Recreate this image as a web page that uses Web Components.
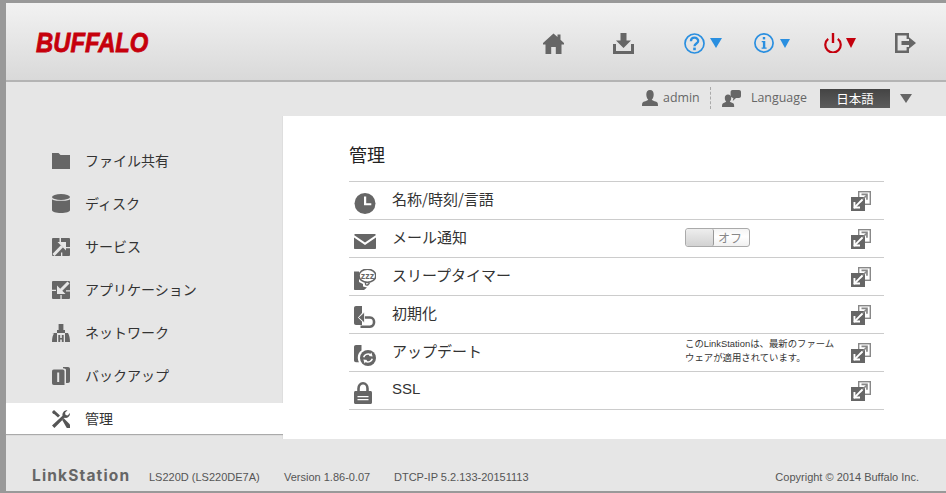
<!DOCTYPE html>
<html lang="ja"><head><meta charset="utf-8"><title>LinkStation</title>
<style>
html,body{margin:0;padding:0;height:100%;background:#999}
body{width:946px;height:493px;overflow:hidden;font-family:"Liberation Sans","Noto Sans CJK JP",sans-serif}
</style></head><body>
<ls-app>
  <ls-header slot="header"></ls-header>
  <ls-subbar slot="subbar"></ls-subbar>
  <ls-nav slot="nav">
    <ls-nav-item icon="folder">ファイル共有</ls-nav-item>
    <ls-nav-item icon="disk">ディスク</ls-nav-item>
    <ls-nav-item icon="service">サービス</ls-nav-item>
    <ls-nav-item icon="app">アプリケーション</ls-nav-item>
    <ls-nav-item icon="network">ネットワーク</ls-nav-item>
    <ls-nav-item icon="backup">バックアップ</ls-nav-item>
    <ls-nav-item icon="tools" active>管理</ls-nav-item>
  </ls-nav>
  <ls-panel slot="panel" heading="管理">
    <ls-row icon="clock" label="名称/時刻/言語"></ls-row>
    <ls-row icon="mail" label="メール通知"><ls-toggle>オフ</ls-toggle></ls-row>
    <ls-row icon="sleep" label="スリープタイマー"></ls-row>
    <ls-row icon="reset" label="初期化"></ls-row>
    <ls-row icon="update" label="アップデート"><ls-note>このLinkStationは、最新のファーム<br>ウェアが適用されています。</ls-note></ls-row>
    <ls-row icon="lock" label="SSL" latin></ls-row>
  </ls-panel>
  <ls-footer slot="footer"></ls-footer>
</ls-app>
<script>
const ICONS={
 home:[21,21,`<path fill="#666" d="M10.5 0.5 14.5 4V1.5H17.5V6.7L21 10V11.5H18.5V21H12.8V14H8.2V21H2.5V11.5H0V10Z"/>`],
 download:[21,21,`<path fill="#666" d="M7.5 0H13.5V7.5H18L10.5 15 3 7.5H7.5Z"/><path fill="#666" d="M0 11H3V18H18V11H21V21H0Z"/>`],
 help:[21,21,`<circle cx="10.5" cy="10.5" r="9.5" fill="none" stroke="#2a8fe0" stroke-width="1.7"/><path fill="none" stroke="#2a8fe0" stroke-width="2.3" d="M6.9 8.2C6.9 3.6 14.2 3.6 14.2 8C14.2 10.6 10.5 10.4 10.5 13.2"/><rect x="9.2" y="14.6" width="2.6" height="2.6" fill="#2a8fe0"/>`],
 info:[20,20,`<circle cx="10" cy="10" r="9.1" fill="none" stroke="#2a8fe0" stroke-width="1.7"/><rect x="8.8" y="4" width="2.4" height="2.4" fill="#2a8fe0"/><path fill="#2a8fe0" d="M7.7 7.9H11.3V14.4H12.6V15.8H7.6V14.4H8.9V9.3H7.7Z"/>`],
 power:[18,20,`<path fill="none" stroke="#c4000d" stroke-width="2.2" d="M4.2 5.8A7.7 7.7 0 1 0 13.8 5.8"/><path fill="none" stroke="#c4000d" stroke-width="2.4" d="M9 0V10"/>`],
 logout:[21,20,`<path fill="#666" d="M0 0H14V6H11.6V2.4H2.6V17.6H11.6V14H14V20H0Z"/><path fill="#666" d="M6.5 8H14V4.3L21 10 14 15.7V12H6.5Z"/>`],
 person:[16,16,`<path fill="#666" d="M8 0C10.6 0 11.7 2 11.7 4.4C11.7 7 10.6 8.8 9.8 9.6C10 10.8 13.4 11.2 15 12.2C15.8 12.8 16 14 16 16H0C0 14 .2 12.8 1 12.2C2.6 11.2 6 10.8 6.2 9.6C5.4 8.8 4.3 7 4.3 4.4C4.3 2 5.4 0 8 0Z"/>`],
 lang:[19,17,`<path fill="#666" d="M6 4.5C8 4.5 9.2 6 9.2 8C9.2 9.7 8.5 11 7.8 11.6C8 12.4 10.6 12.7 11.5 13.5C12 14 12.2 15.4 12.2 17H0C0 15.4.2 14 .8 13.5C1.7 12.7 4 12.4 4.2 11.6C3.5 11 2.8 9.7 2.8 8C2.8 6 4 4.5 6 4.5Z"/><path fill="#666" d="M10.5 0H17C18.2 0 19 .8 19 2V6C19 7.2 18.2 8 17 8H14L10.8 11 11.4 8C10 7.8 8.6 7 8.6 6V2C8.6 .8 9.4 0 10.5 0Z"/>`],
 folder:[18,16,`<path fill="#666" d="M0 0H6.5L8.5 2H18V16H0Z"/>`],
 disk:[18,19,`<ellipse cx="9" cy="3" rx="9" ry="3" fill="#666"/><path fill="#666" d="M0 5.2C2 7.4 16 7.4 18 5.2V16C18 18 14 19 9 19S0 18 0 16Z"/>`],
 service:[18,18,`<rect width="18" height="18" rx="1" fill="#666"/><path fill="#e6e6e6" d="M7.5 0H9V4H7.5ZM14 9H18V10.3H14ZM9 14.5H10.3V18H9Z"/><path fill="none" stroke="#e6e6e6" stroke-width="3" d="M1.5 17 10 8.2"/><path fill="#e6e6e6" d="M14 4V12.5L5.5 4Z"/>`],
 app:[18,18,`<rect width="18" height="18" rx="1" fill="#666"/><path fill="#e6e6e6" d="M0 8.8H4V10.1H0ZM14 9.2H18V10.5H14ZM8.4 14H9.7V18H8.4Z"/><path fill="none" stroke="#e6e6e6" stroke-width="3" d="M8.5 9.5 16.5 1.5"/><path fill="#e6e6e6" d="M5 13V4.5L13.5 13Z"/>`],
 network:[18,18,`<path fill="#666" d="M6.6 0H11.4V6H13V9H5V6H6.6Z"/><path fill="#666" d="M0 9H5V18H0C0 14 .8 11 2 9.5Z"/><path fill="#666" d="M13 9H16C17.2 11 18 14 18 18H13Z"/><path fill="#666" d="M6.3 11H8.2V14H9.8V11H11.7V18H9.8V15.5H8.2V18H6.3Z"/>`],
 backup:[18,18,`<path fill="#666" d="M11 0H16C17.2 0 18 .8 18 2V14C18 15.2 17.2 16 16 16H14V3C14 2 12.8 1.2 11 1.2Z"/><path fill="#666" d="M1.8 2.5H10.5C11.8 2.5 12.5 3.3 12.5 4.5V18H1.8C.6 18 0 17.2 0 16V4.5C0 3.3 .6 2.5 1.8 2.5Z"/><rect x="5.2" y="5.5" width="2" height="9.5" fill="#e6e6e6"/>`],
 tools:[18,18,`<path fill="#555" d="M0 15.6 10.5 5.8C10 3 12 0 15.5 .3L13 2.8 13.6 4.9 15.6 5.4 18 3C18.2 6.4 15.4 8.4 12.6 7.8L2.4 18Z"/><path fill="#555" d="M0 2 2 0 8 5.6 6 7.6 2.4 4.2 1 3.8Z"/><path fill="#555" d="M10.2 10 12 8.4 18 14.4V18H14.8Z"/>`],
 clock:[22,21,`<circle cx="11" cy="10.5" r="10.5" fill="#666"/><path fill="#fff" d="M10 3.5H12.2V10.2H17.3V12.2H10Z"/>`],
 mail:[22,15,`<path fill="#666" d="M0 1 1 0H21L22 1 11 8.5Z"/><path fill="#666" d="M0 3.4 11 11 22 3.4V14C22 14.6 21.6 15 21 15H1C.4 15 0 14.6 0 14Z"/>`],
 sleep:[22,21,`<path fill="#666" d="M0 2.5H5V13L9 15V17.5L13 18.5 10 21H1C.4 21 0 20.6 0 20Z"/><ellipse cx="13.4" cy="6.8" rx="8.4" ry="6.6" fill="#fff" stroke="#666" stroke-width="1.6"/><text x="13.4" y="10" text-anchor="middle" font-family="Liberation Sans" font-weight="700" font-size="9" fill="#666">zzz</text><path fill="none" stroke="#666" stroke-width="1.4" d="M11.5 13V15C11.5 16.4 13.5 16.4 14.2 15.5L15.5 14"/>`],
 reset:[22,22,`<path fill="#666" d="M2 0H8V7L4 11.5 8 15.5V19H2C.8 19 0 18.2 0 17V2C0 .8.8 0 2 0Z"/><path fill="none" stroke="#666" stroke-width="2.6" d="M9 11.5H16C21.4 11.5 21.4 20.7 16 20.7H6.5"/><path fill="#666" stroke="#fff" stroke-width=".8" d="M4.5 11.5 10.5 6V17Z"/>`],
 update:[22,21,`<path fill="#666" d="M2 0H7.5V5.5C5 7 3.8 9.6 3.8 12.4 3.8 14 4.2 15.8 5 17.2H2C.8 17.2 0 16.4 0 15.2V2C0 .8.8 0 2 0Z"/><circle cx="14" cy="13" r="8" fill="#666"/><path fill="none" stroke="#fff" stroke-width="1.5" d="M9.7 12.2C10.3 9.8 13.6 8 16.6 9.8M18.3 13.8C17.7 16.2 14.4 18 11.4 16.2"/><path fill="#fff" d="M17.4 7.6 18.6 11.4 14.8 11ZM10.6 18.4 9.4 14.6 13.2 15Z"/>`],
 lock:[18,22,`<path fill="none" stroke="#666" stroke-width="2.6" d="M4.5 10V6.5C4.5 3.4 6.4 1.3 9 1.3S13.5 3.4 13.5 6.5V10"/><path fill="#666" d="M1.5 9H16.5C17.4 9 18 9.6 18 10.5V20.5C18 21.4 17.4 22 16.5 22H1.5C.6 22 0 21.4 0 20.5V10.5C0 9.6 .6 9 1.5 9Z"/><path fill="#fff" d="M3.5 14H14.5V15.3H3.5ZM3.5 17H14.5V18.3H3.5Z"/>`],
 popup:[20,20,`<rect x="7.7" y=".7" width="11.6" height="12.6" fill="#fff" stroke="#888" stroke-width="1.4"/><rect y="6" width="14" height="14" fill="#666"/><path fill="none" stroke="#fff" stroke-width="1.8" d="M3 17 9.8 10.2"/><path fill="#fff" d="M2.5 11H4.4V15.6H9V17.5H2.5Z"/><path fill="none" stroke="#888" stroke-width="1.6" d="M9.5 10.5 16 4"/><path fill="#888" d="M10.5 2.5H16.8V8.8H15.1V4.2H10.5Z"/><path fill="none" stroke="#fff" stroke-width="1.8" d="M9 11 11.5 8.5"/>`]
};
function svg(n){const [w,h,b]=ICONS[n];return `<svg xmlns="http://www.w3.org/2000/svg" width="${w}" height="${h}" viewBox="0 0 ${w} ${h}" style="display:block">${b}</svg>`}
function def(tag,html){customElements.define(tag,class extends HTMLElement{
  constructor(){super();this.attachShadow({mode:'open'});}
  connectedCallback(){this.shadowRoot.innerHTML=typeof html==='function'?html(this):html;}
});}
const tri=(c,w,h)=>`<span style="display:block;width:0;height:0;border-left:${w/2}px solid transparent;border-right:${w/2}px solid transparent;border-top:${h}px solid ${c}"></span>`;

def('ls-app',`<style>
:host{display:flex;flex-direction:column;box-sizing:border-box;width:946px;height:493px;padding:3px 0 2px 6px;background:#999}
.mid{display:flex;height:323px;flex:none}
.foot{flex:1;display:flex;min-height:0}
::slotted(ls-footer){flex:1}
</style>
<slot name="header"></slot><slot name="subbar"></slot>
<div class="mid"><slot name="nav"></slot><slot name="panel"></slot></div>
<div class="foot"><slot name="footer"></slot></div>`);

def('ls-header',`<style>
:host{display:flex;align-items:center;box-sizing:border-box;height:79px;flex:none;background:linear-gradient(#f2f2f2,#d9d9d9);border-bottom:2px solid #b4b4b4}
.logo{margin-left:30px;margin-top:2px;width:113px;flex:none;font:italic 700 28px/28px "Liberation Sans",sans-serif;color:#c6000c;-webkit-text-stroke:.8px #c6000c;transform:scaleX(.85);transform-origin:left center;white-space:nowrap}
.i{display:flex;align-items:center;margin-top:3px}
.home{margin-left:394px}.dl{margin-left:49px}.help{margin-left:50px}.info{margin-left:32px}.power{margin-left:34px}.out{margin-left:39px}
.t{margin-left:5px}
</style>
<div class="logo">BUFFALO</div>
<div class="i home">${svg('home')}</div>
<div class="i dl">${svg('download')}</div>
<div class="i help">${svg('help')}<span class="t">${tri('#2a8fe0',12,10)}</span></div>
<div class="i info">${svg('info')}<span class="t" style="margin-left:6px">${tri('#2a8fe0',11,9)}</span></div>
<div class="i power">${svg('power')}<span class="t" style="margin-left:4px">${tri('#c4000d',11,10)}</span></div>
<div class="i out">${svg('logout')}</div>`);

def('ls-subbar',`<style>
:host{display:flex;align-items:center;box-sizing:border-box;height:34px;flex:none;background:#e6e6e6;padding:0 0 2px 636px;color:#666;font:12.4px/16px "Open Sans","Liberation Sans",sans-serif}
.a{margin-left:5px;width:37px;flex:none}
.sep{margin-left:10px;height:22px;border-left:1px dashed #aaa}
.l{margin-left:11px}
.lt{margin-left:10px;width:57px;flex:none;white-space:nowrap}
.box{margin-left:12px;width:70px;height:19px;background:linear-gradient(#444,#5c5c5c);color:#fff;font:12.5px/19px "Noto Sans CJK JP",sans-serif;text-align:center}
.ar{margin-left:10px}
</style>
${svg('person')}<span class="a">admin</span><span class="sep"></span>
<span class="l">${svg('lang')}</span><span class="lt">Language</span>
<span class="box">日本語</span><span class="ar">${tri('#666',12,9)}</span>`);

def('ls-nav',`<style>
:host{display:flex;flex-direction:column;box-sizing:border-box;width:277px;flex:none;background:#e6e6e6;padding-top:29px;gap:12px;box-shadow:inset -1px 0 1px -1px #999;align-items:stretch}
</style><slot></slot>`);

def('ls-nav-item',el=>`<style>
:host{display:flex;align-items:center;height:31px;flex:none;box-sizing:border-box;color:#333;font:14px/20px "Noto Sans CJK JP",sans-serif}
:host([active]){background:#fff;box-shadow:0 1px 1px #aaa}
.ic{width:33px;margin-left:46px;display:flex;align-items:center;height:20px}
.t{margin-top:-2px}
</style><span class="ic">${svg(el.getAttribute('icon'))}</span><span class="t"><slot></slot></span>`);

def('ls-panel',el=>`<style>
:host{display:block;box-sizing:border-box;flex:1;background:#fff;padding:0 62px 0 66px;box-shadow:0 1px 0 #eee}
h1{margin:0;height:65px;box-sizing:border-box;padding-top:25px;font:400 18px/26px "Noto Sans CJK JP",sans-serif;color:#222}
.list{border-bottom:1px solid #ccc}
</style><h1>${el.getAttribute('heading')}</h1><div class="list"><slot></slot></div>`);

def('ls-row',el=>`<style>
:host{display:flex;align-items:center;box-sizing:border-box;height:38px;border-top:1px solid #ccc;color:#333;font:15px/20px "Noto Sans CJK JP","Liberation Sans",sans-serif}
.ic{width:38px;margin-left:5px;flex:none;display:flex;align-items:center;padding-top:5px}
.lab{width:293px;flex:none;margin-top:-4px}
.lat{font-family:"Liberation Sans",sans-serif}
.ex{width:166px;flex:none;display:flex;align-items:center}
.po{flex:none;padding-top:1px}
</style><span class="ic">${svg(el.getAttribute('icon'))}</span><span class="lab"><span class="${el.hasAttribute('latin')?'lat':''}">${el.getAttribute('label')}</span></span><span class="ex"><slot></slot></span><span class="po">${svg('popup')}</span>`);

def('ls-toggle',`<style>
:host{display:flex;box-sizing:border-box;width:65px;height:19px;border:1px solid #aaa;border-radius:3px;background:linear-gradient(#f4f4f4,#fff 45%,#f0f0f0);overflow:hidden;color:#888;font:12px/17px "Noto Sans CJK JP",sans-serif;margin-top:-3px}
.k{width:27px;background:linear-gradient(#eee,#d2d2d2);border-right:1px solid #999;border-radius:2px}
.t{flex:1;text-align:center;padding-right:3px}
</style><span class="k"></span><span class="t"><slot></slot></span>`);

def('ls-note',`<style>
:host{display:block;color:#333;font:9.4px/14px "Liberation Sans","Noto Sans CJK JP",sans-serif;white-space:nowrap;margin-top:-3px}
</style><slot></slot>`);

def('ls-footer',`<style>
:host{display:flex;align-items:center;box-sizing:border-box;background:#e6e6e6;padding:24px 27px 0 26px;color:#555;font:11px/14px "Liberation Sans",sans-serif}
.ls{font:700 15.5px/18px Inter,sans-serif;color:#666;letter-spacing:1.15px;width:117px;flex:none;white-space:nowrap;margin-top:-3px}
.m{width:135px;flex:none}.v{width:110px;flex:none}
.c{margin-left:auto}
</style><span class="ls">LinkStation</span><span class="m">LS220D (LS220DE7A)</span><span class="v">Version 1.86-0.07</span><span>DTCP-IP 5.2.133-20151113</span><span class="c">Copyright © 2014 Buffalo Inc.</span>`);
</script>
</body></html>
